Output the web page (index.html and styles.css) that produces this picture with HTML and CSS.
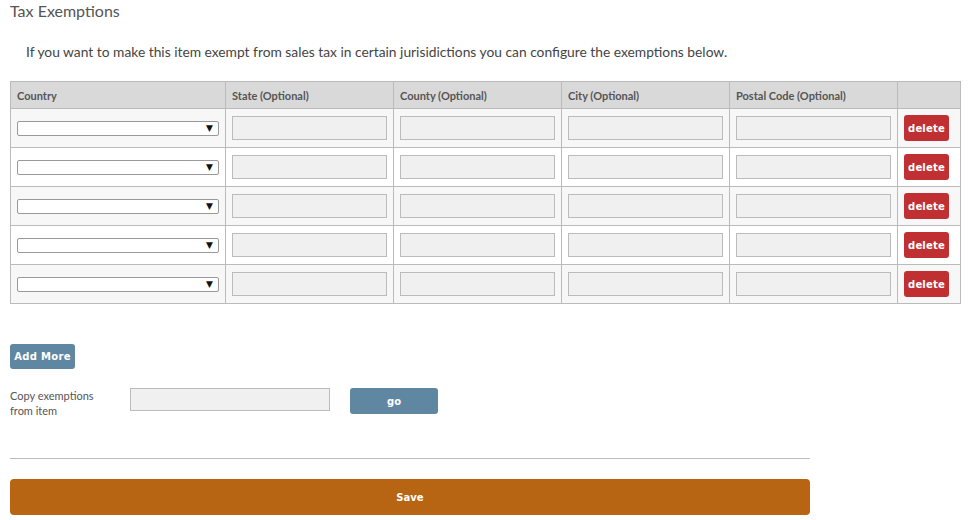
FILE: index.html
```html
<!doctype html>
<html lang="en">
<head>
<meta charset="UTF-8" />
<title>Tax Exemptions</title>
<link rel="stylesheet" href="styles.css">
</head>
<body>

<div class="page">
	<h2 class="title">Tax Exemptions</h2>
	<p class="intro">If you want to make this item exempt from sales tax in certain jurisidictions you can configure the exemptions below.</p>

	<table class="exemptions">
		<thead>
			<tr>
				<th class="col-country">Country</th>
				<th class="col-field">State (Optional)</th>
				<th class="col-field">County (Optional)</th>
				<th class="col-field">City (Optional)</th>
				<th class="col-field">Postal Code (Optional)</th>
				<th class="col-action"></th>
			</tr>
		</thead>
		<tbody>
			<tr>
				<td><span class="select"><span class="arrow">&#9660;</span></span></td>
				<td><span class="input"></span></td>
				<td><span class="input"></span></td>
				<td><span class="input"></span></td>
				<td><span class="input"></span></td>
				<td><a class="btn btn-delete">delete</a></td>
			</tr>
			<tr>
				<td><span class="select"><span class="arrow">&#9660;</span></span></td>
				<td><span class="input"></span></td>
				<td><span class="input"></span></td>
				<td><span class="input"></span></td>
				<td><span class="input"></span></td>
				<td><a class="btn btn-delete">delete</a></td>
			</tr>
			<tr>
				<td><span class="select"><span class="arrow">&#9660;</span></span></td>
				<td><span class="input"></span></td>
				<td><span class="input"></span></td>
				<td><span class="input"></span></td>
				<td><span class="input"></span></td>
				<td><a class="btn btn-delete">delete</a></td>
			</tr>
			<tr>
				<td><span class="select"><span class="arrow">&#9660;</span></span></td>
				<td><span class="input"></span></td>
				<td><span class="input"></span></td>
				<td><span class="input"></span></td>
				<td><span class="input"></span></td>
				<td><a class="btn btn-delete">delete</a></td>
			</tr>
			<tr>
				<td><span class="select"><span class="arrow">&#9660;</span></span></td>
				<td><span class="input"></span></td>
				<td><span class="input"></span></td>
				<td><span class="input"></span></td>
				<td><span class="input"></span></td>
				<td><a class="btn btn-delete">delete</a></td>
			</tr>
		</tbody>
	</table>

	<a class="btn btn-add">Add More</a>

	<div class="copy">
		<label class="copy-label">Copy exemptions<br>from item</label>
		<span class="input copy-input"></span>
		<a class="btn btn-go">go</a>
	</div>

	<div class="footer">
		<hr class="rule">
		<a class="btn btn-save">Save</a>
	</div>
</div>

</body>
</html>
```

FILE: styles.css
```css
html,body,h2,p{margin:0;padding:0;}
a{text-decoration:none;}

body{
	background: #fff;
	font-family: Lato, "Open Sans", sans-serif;
	color: #555;
}

.page{
	padding: 0 10px;
}

.title{
	font-size: 16px;
	font-weight: normal;
	color: #555;
	line-height: 22px;
}

.intro{
	font-size: 13.8px;
	color: #444;
	padding: 20px 0 0 16px;
	line-height: 20px;
}

/* table */
.exemptions{
	width: 951px;
	margin-top: 19px;
	border-collapse: collapse;
	font-size: 12px;
}

.exemptions th{
	height: 26px;
	background-color: #d9d9d9;
	border: 1px solid #bbb;
	text-align: left;
	font-weight: bold;
	color: #555;
	padding: 0 6px;
	font-size: 11px;
}

.exemptions th.col-country{ width: 202px; }
.exemptions th.col-field{ width: 155px; }

.exemptions td{
	height: 38px;
	border: 1px solid #bbb;
	padding: 0 6px;
	background-color: #f7f7f7;
}

.exemptions tbody tr:nth-child(even) td{
	background-color: #fff;
}

.select{
	display: flex;
	justify-content: flex-end;
	align-items: center;
	height: 13px;
	border: 1px solid #999;
	border-radius: 2px;
	background: #fff;
	padding-right: 5px;
}

.select .arrow{
	font-size: 9px;
	color: #111;
	line-height: 9px;
	font-family: "DejaVu Sans", sans-serif;
}

.input{
	display: block;
	height: 22px;
	border: 1px solid #bbb;
	background-color: #f0f0f0;
}

/* buttons */
.btn{
	display: inline-flex;
	align-items: center;
	justify-content: center;
	color: #fff;
	font-family: "DejaVu Sans", Verdana, sans-serif;
	font-weight: bold;
	font-size: 10px;
	border-radius: 3px;
}

.btn-delete{
	background-color: #c03033;
	width: 45px;
	height: 26px;
	letter-spacing: 0.2px;
}

.btn-add{
	margin-top: 40px;
	background-color: #5f87a1;
	width: 65px;
	height: 25px;
	letter-spacing: 0.3px;
}

.copy{
	display: flex;
	align-items: flex-start;
	margin-top: 19px;
}

.copy-label{
	width: 120px;
	font-size: 11px;
	line-height: 15px;
	color: #555;
}

.copy-input{
	width: 198px;
	height: 21px;
}

.btn-go{
	margin-left: 20px;
	background-color: #5f87a1;
	width: 88px;
	height: 26px;
}

.footer{
	width: 800px;
}

.rule{
	margin: 40px 0 0;
	border: 0;
	border-top: 1px solid #bbb;
	height: 0;
}

.btn-save{
	display: flex;
	margin-top: 20px;
	background-color: #b76413;
	height: 36px;
	border-radius: 4px;
}
```
